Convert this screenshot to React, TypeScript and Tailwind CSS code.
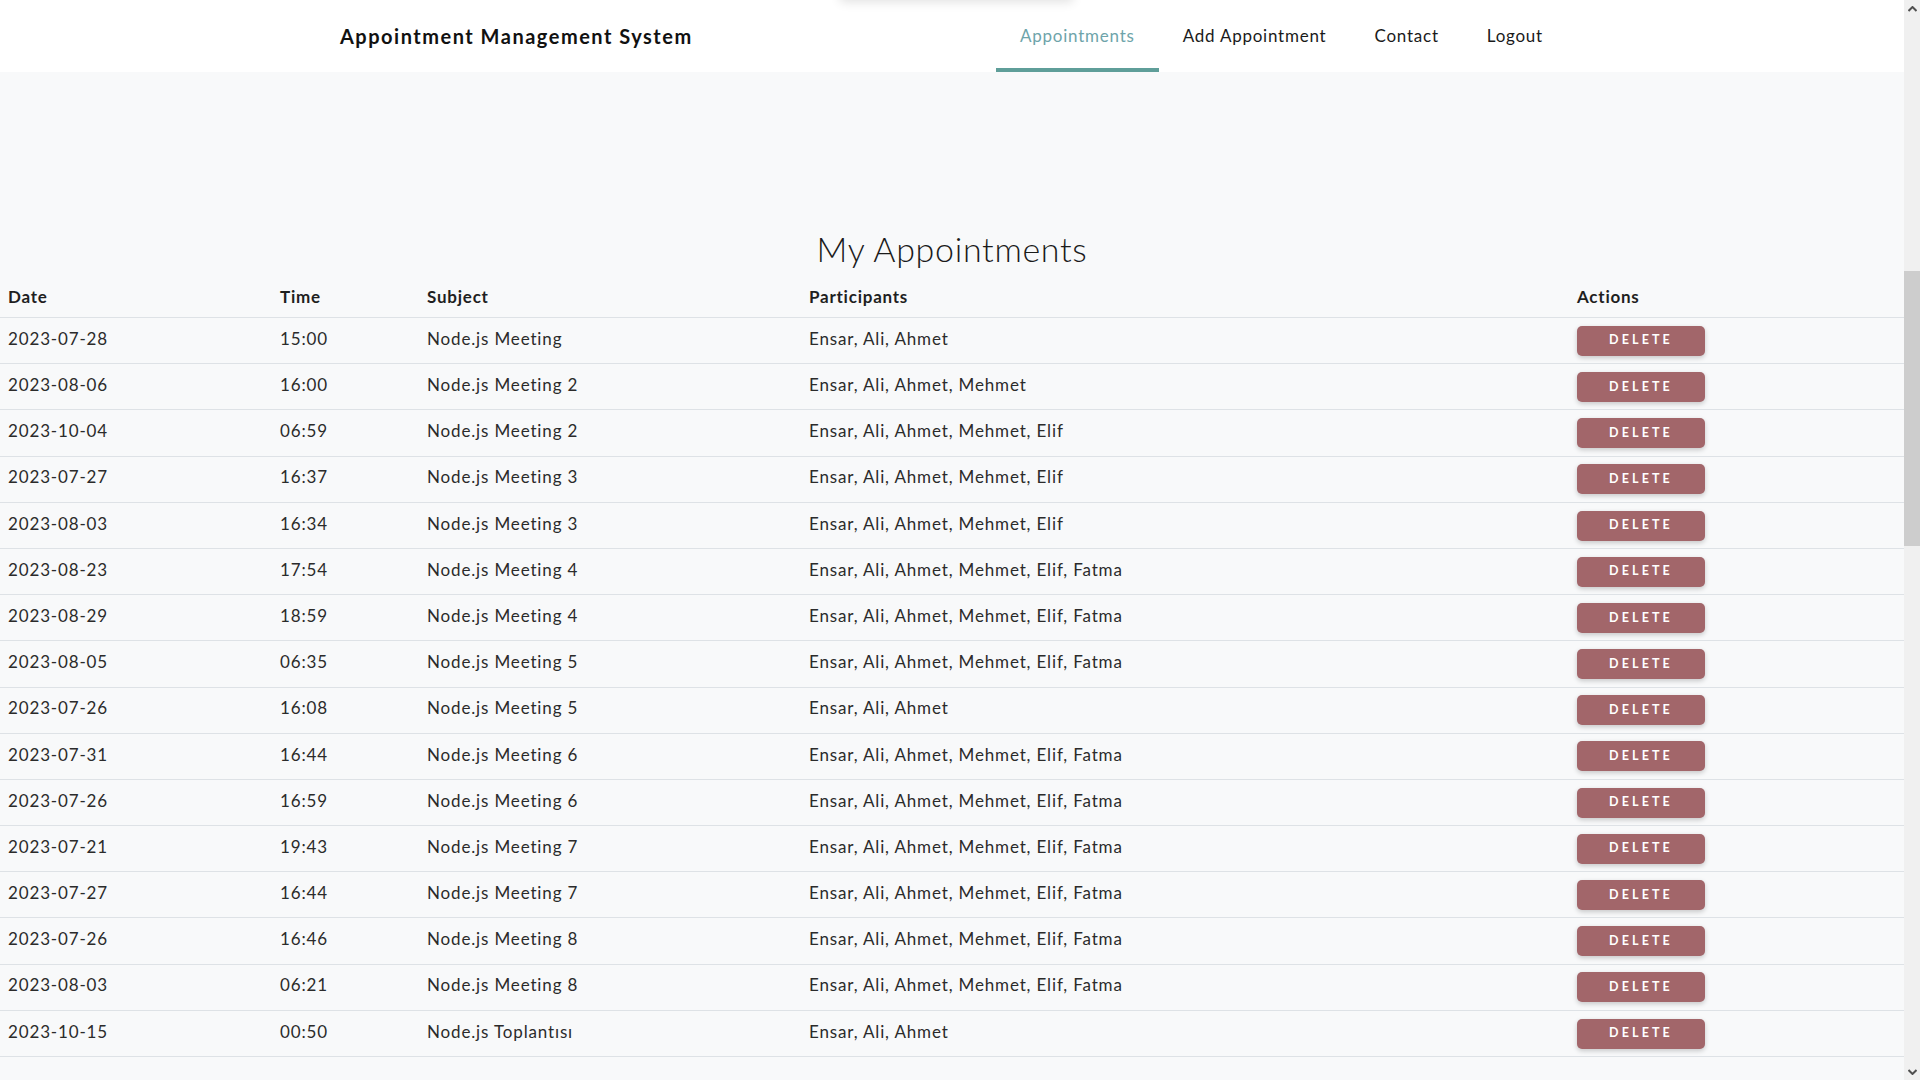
import React from 'react';

interface Appointment {
  date: string;
  time: string;
  subject: string;
  participants: string;
}

const appointments: Appointment[] = [
  { date: '2023-07-28', time: '15:00', subject: 'Node.js Meeting', participants: 'Ensar, Ali, Ahmet' },
  { date: '2023-08-06', time: '16:00', subject: 'Node.js Meeting 2', participants: 'Ensar, Ali, Ahmet, Mehmet' },
  { date: '2023-10-04', time: '06:59', subject: 'Node.js Meeting 2', participants: 'Ensar, Ali, Ahmet, Mehmet, Elif' },
  { date: '2023-07-27', time: '16:37', subject: 'Node.js Meeting 3', participants: 'Ensar, Ali, Ahmet, Mehmet, Elif' },
  { date: '2023-08-03', time: '16:34', subject: 'Node.js Meeting 3', participants: 'Ensar, Ali, Ahmet, Mehmet, Elif' },
  { date: '2023-08-23', time: '17:54', subject: 'Node.js Meeting 4', participants: 'Ensar, Ali, Ahmet, Mehmet, Elif, Fatma' },
  { date: '2023-08-29', time: '18:59', subject: 'Node.js Meeting 4', participants: 'Ensar, Ali, Ahmet, Mehmet, Elif, Fatma' },
  { date: '2023-08-05', time: '06:35', subject: 'Node.js Meeting 5', participants: 'Ensar, Ali, Ahmet, Mehmet, Elif, Fatma' },
  { date: '2023-07-26', time: '16:08', subject: 'Node.js Meeting 5', participants: 'Ensar, Ali, Ahmet' },
  { date: '2023-07-31', time: '16:44', subject: 'Node.js Meeting 6', participants: 'Ensar, Ali, Ahmet, Mehmet, Elif, Fatma' },
  { date: '2023-07-26', time: '16:59', subject: 'Node.js Meeting 6', participants: 'Ensar, Ali, Ahmet, Mehmet, Elif, Fatma' },
  { date: '2023-07-21', time: '19:43', subject: 'Node.js Meeting 7', participants: 'Ensar, Ali, Ahmet, Mehmet, Elif, Fatma' },
  { date: '2023-07-27', time: '16:44', subject: 'Node.js Meeting 7', participants: 'Ensar, Ali, Ahmet, Mehmet, Elif, Fatma' },
  { date: '2023-07-26', time: '16:46', subject: 'Node.js Meeting 8', participants: 'Ensar, Ali, Ahmet, Mehmet, Elif, Fatma' },
  { date: '2023-08-03', time: '06:21', subject: 'Node.js Meeting 8', participants: 'Ensar, Ali, Ahmet, Mehmet, Elif, Fatma' },
  { date: '2023-10-15', time: '00:50', subject: 'Node.js Toplantısı', participants: 'Ensar, Ali, Ahmet' },
];

const navLinks = ['Appointments', 'Add Appointment', 'Contact', 'Logout'];

const cols = 'grid grid-cols-[272px_147px_382px_768px_1fr]';

const App = () => {
  return (
    <div className="flex h-screen overflow-hidden bg-[#f8f9fa] font-['Lato',sans-serif] text-[#212529]">
      <div className="relative flex-1 overflow-hidden">
        {/* navbar */}
        <nav className="relative flex h-[72px] items-stretch bg-white">
          <div className="flex w-[996px] items-center pl-[340px]">
            <span className="text-[20px] font-bold tracking-[0.075em] text-[#111]">Appointment Management System</span>
          </div>
          <ul className="flex items-stretch">
            {navLinks.map((link, i) => (
              <li
                key={link}
                className={
                  i === 0
                    ? 'flex items-center border-b-4 border-[#5f9e99] px-6 pt-1 text-[17px] tracking-[0.045em] text-[#6ea4aa]'
                    : 'flex items-center border-b-4 border-transparent px-6 pt-1 text-[17px] tracking-[0.045em] text-[#1a1a1a]'
                }
              >
                {link}
              </li>
            ))}
          </ul>
          {/* shadow of something sitting above the viewport */}
          <div className="absolute left-[840px] top-[-40px] h-[40px] w-[233px] bg-white shadow-[0_2px_10px_rgba(0,0,0,0.12)]"></div>
        </nav>

        <h1 className="mt-[155px] text-center text-[34px] leading-[44px] font-light tracking-[0.02em] text-[#1b1b1b]">
          My Appointments
        </h1>

        <div className="mt-px">
          <div className={`${cols} h-[46px] items-center border-b border-[#dee2e6] pt-1 text-[17px] font-bold tracking-[0.045em] text-[#1f1f1f]`}>
            <div className="pl-2">Date</div>
            <div className="pl-2">Time</div>
            <div className="pl-2">Subject</div>
            <div className="pl-2">Participants</div>
            <div className="pl-2">Actions</div>
          </div>
          {appointments.map((a, idx) => (
            <div
              key={idx}
              className={`${cols} h-[46.2px] items-center border-b border-[#dee2e6] text-[17px] tracking-[0.05em] text-[#2b2b2b]`}
            >
              <div className="pl-2 pb-1">{a.date}</div>
              <div className="pl-2 pb-1">{a.time}</div>
              <div className="pl-2 pb-1">{a.subject}</div>
              <div className="pl-2 pb-1">{a.participants}</div>
              <div className="pl-2">
                <button className="h-[30px] w-[128px] rounded-[5px] bg-[#a2666a] text-[12.5px] font-bold tracking-[0.25em] text-white shadow-[0_2px_5px_rgba(0,0,0,0.2)]">
                  DELETE
                </button>
              </div>
            </div>
          ))}
        </div>
      </div>

      {/* page scrollbar */}
      <div className="flex w-[16px] shrink-0 flex-col items-stretch bg-[#f0f0f0]">
        <div className="flex h-[17px] items-center justify-center">
          <svg width="9" height="6" viewBox="0 0 9 6">
            <path d="M0.5 5L4.5 1L8.5 5" fill="none" stroke="#505050" strokeWidth="2" />
          </svg>
        </div>
        <div className="mt-[254px] h-[275px] bg-[#cdcdcd]"></div>
        <div className="flex-1"></div>
        <div className="flex h-[17px] items-center justify-center">
          <svg width="9" height="6" viewBox="0 0 9 6">
            <path d="M0.5 1L4.5 5L8.5 1" fill="none" stroke="#505050" strokeWidth="2" />
          </svg>
        </div>
      </div>
    </div>
  );
};

export default App;
